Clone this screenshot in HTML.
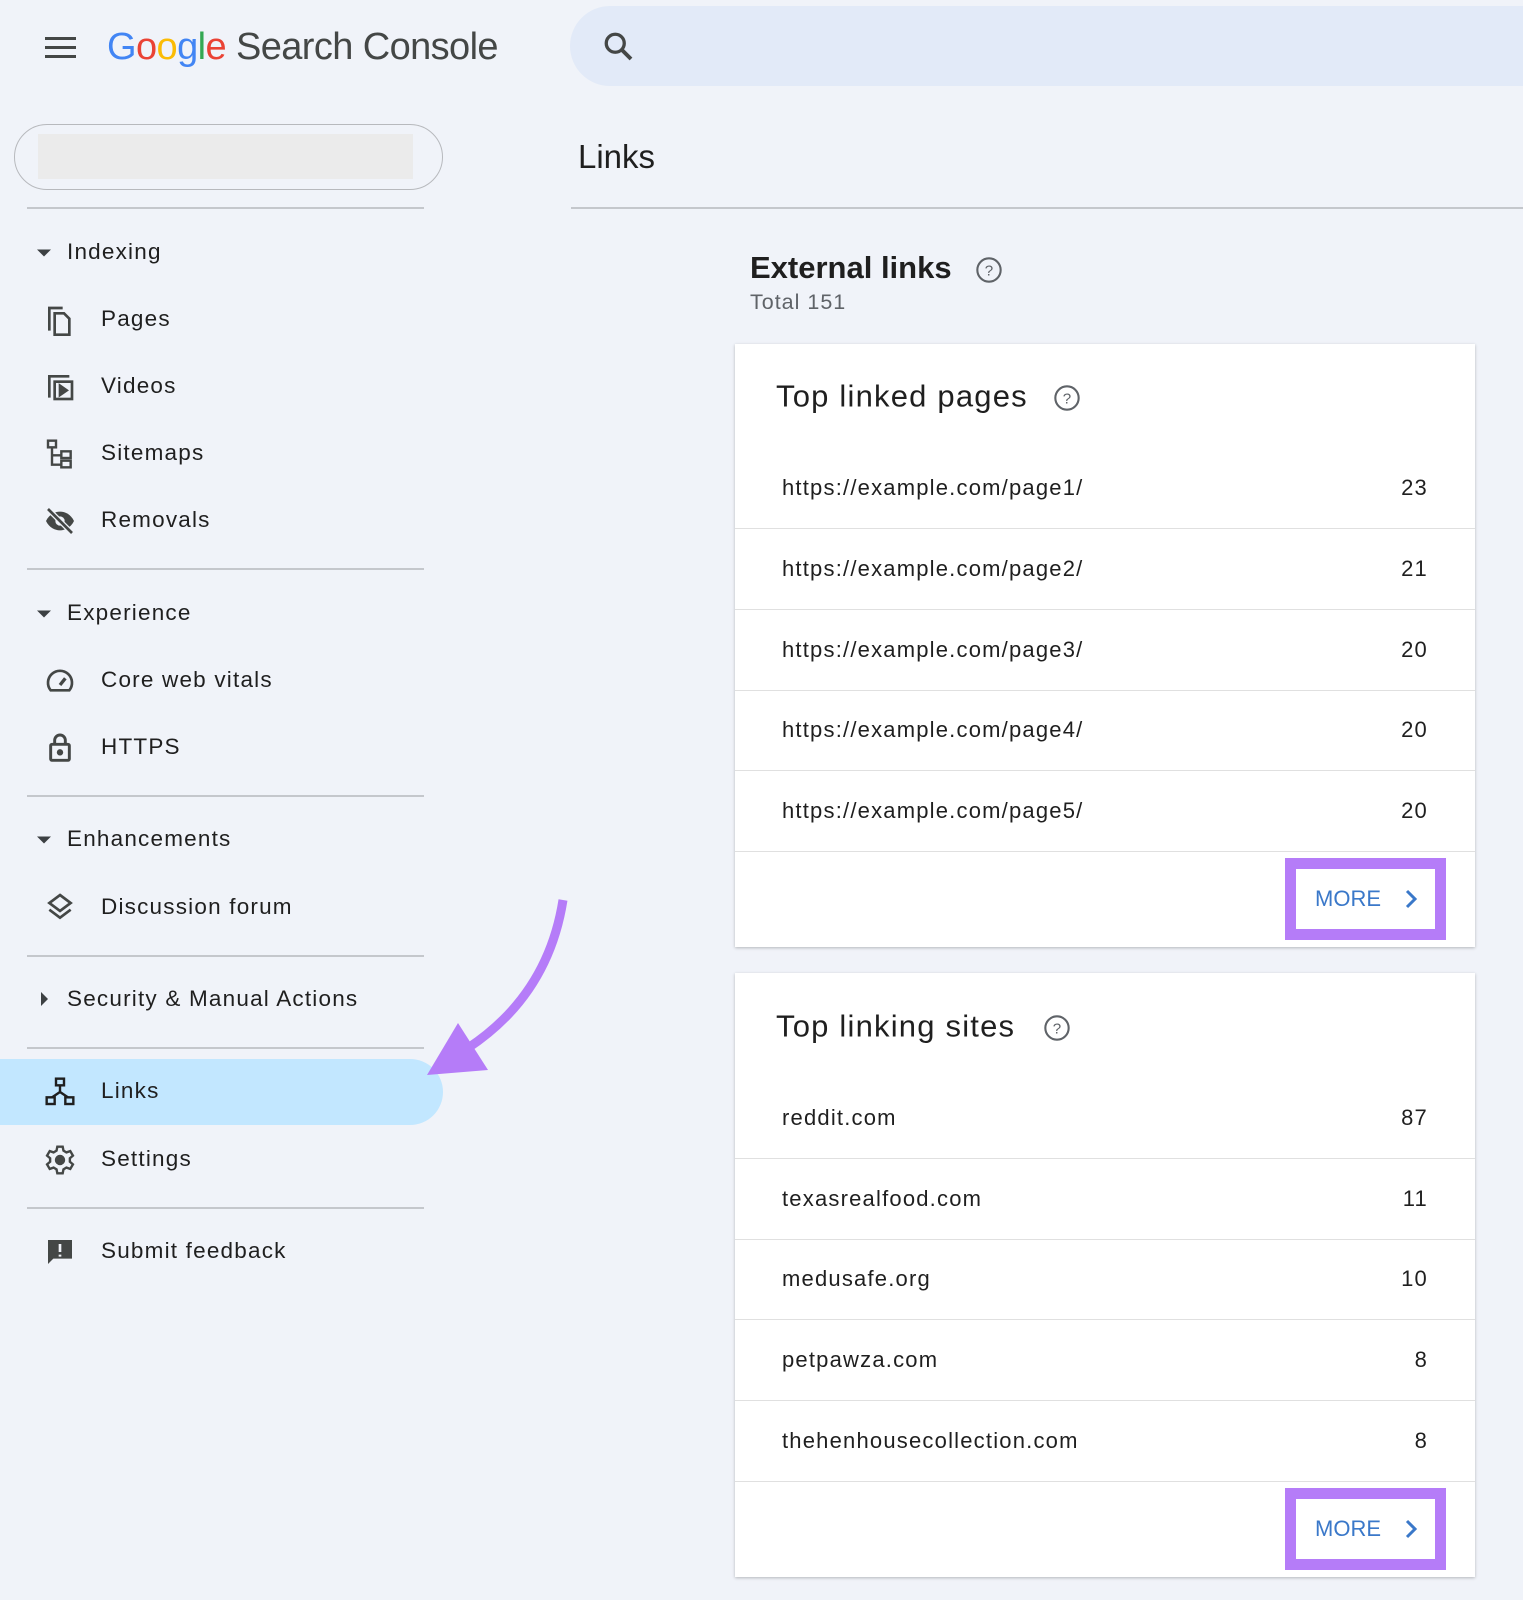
<!DOCTYPE html>
<html><head><meta charset="utf-8"><style>
*{margin:0;padding:0;box-sizing:border-box}
body{width:1523px;height:1600px;background:#f0f3f9;font-family:"Liberation Sans",Roboto,sans-serif;color:#1f1f1f;position:relative;overflow:hidden}
.a{position:absolute}
.hr{position:absolute;height:2px;background:#c4c7cc}
.nav{position:absolute;left:101px;font-size:22.5px;color:#1f1f1f;line-height:1;transform:translateY(-50%);letter-spacing:1.2px}
.sec{position:absolute;left:67px;font-size:22.5px;color:#1f1f1f;line-height:1;transform:translateY(-50%);letter-spacing:1.2px}
.ic{position:absolute;left:44px;width:32px;height:32px;transform:translateY(-50%)}
.tri{position:absolute;left:37px;width:0;height:0;border-left:7px solid transparent;border-right:7px solid transparent;border-top:7px solid #3c4043;transform:translateY(-50%)}
.card{position:absolute;left:735px;width:740px;background:#fff;box-shadow:0 1px 3px rgba(0,0,0,.25)}
.row{position:absolute;left:0;right:0;height:81px;border-bottom:1.5px solid #e0e0e0;font-size:22px;letter-spacing:1.2px}
.row span{position:absolute;top:50%;transform:translateY(-50%)}
.row .l{left:47px}.row .r{right:47px}
.ct{position:absolute;left:41px;font-size:31px;line-height:1;transform:translateY(-50%);letter-spacing:1.2px}
.more{position:absolute;left:550px;width:161px;height:82px;border:11px solid #b57cf8;background:#fff}
.more span{position:absolute;left:19px;top:50%;transform:translateY(-50%);font-size:22px;color:#3a78c9;font-weight:500}
</style></head><body>
<!-- header -->
<div class="a" style="left:45px;top:37px;width:31px;height:3px;background:#444746"></div>
<div class="a" style="left:45px;top:46px;width:31px;height:3px;background:#444746"></div>
<div class="a" style="left:45px;top:55px;width:31px;height:3px;background:#444746"></div>
<div class="a" style="left:107px;top:28px;font-size:38px;line-height:1;white-space:nowrap;letter-spacing:-0.6px"><span style="color:#4285f4">G</span><span style="color:#ea4335">o</span><span style="color:#fbbc05">o</span><span style="color:#4285f4">g</span><span style="color:#34a853">l</span><span style="color:#ea4335">e</span> <span style="color:#444746">Search Console</span></div>
<div class="a" style="left:570px;top:6px;width:1000px;height:80px;border-radius:40px;background:#e2eaf8"></div>
<svg class="a" style="left:601px;top:29px" width="36" height="36" viewBox="0 0 24 24"><circle cx="9.5" cy="9.5" r="6" fill="none" stroke="#444746" stroke-width="2.2"/><path d="M14 14l6 6" stroke="#444746" stroke-width="2.6"/></svg>
<!-- property -->
<div class="a" style="left:14px;top:124px;width:429px;height:66px;border:1.5px solid #b7b9bd;border-radius:33px"></div>
<div class="a" style="left:38px;top:134px;width:375px;height:45px;background:#ebebeb"></div>
<div class="hr" style="left:27px;top:207px;width:397px"></div>
<div class="hr" style="left:27px;top:568px;width:397px"></div>
<div class="hr" style="left:27px;top:795px;width:397px"></div>
<div class="hr" style="left:27px;top:955px;width:397px"></div>
<div class="hr" style="left:27px;top:1047px;width:397px"></div>
<div class="hr" style="left:27px;top:1207px;width:397px"></div>
<!-- nav -->
<div class="tri" style="top:253px"></div><div class="sec" style="top:252px">Indexing</div>
<svg class="ic" style="top:320px" viewBox="0 0 24 24" fill="none" stroke="#444746" stroke-width="2"><path d="M4 20V3h10"/><path d="M8 7h7l4 4v12H8z"/></svg><div class="nav" style="top:319px">Pages</div>
<svg class="ic" style="top:387px" viewBox="0 0 24 24" fill="none" stroke="#444746" stroke-width="2"><path d="M4 20V4h15"/><rect x="8" y="8" width="13" height="13"/><path d="M12 11v7l5-3.5z" fill="#444746"/></svg><div class="nav" style="top:386px">Videos</div>
<svg class="ic" style="top:454px" viewBox="0 0 24 24" fill="none" stroke="#444746" stroke-width="1.8"><rect x="3" y="2" width="6" height="5"/><path d="M6 7v13h7M6 13h7"/><rect x="13" y="10" width="7" height="5"/><rect x="13" y="17" width="7" height="5"/></svg><div class="nav" style="top:453px">Sitemaps</div>
<svg class="ic" style="top:521px" viewBox="0 0 24 24"><path d="M1.5 12C4 7 8 5 12 5s8 2 10.5 7c-2.5 5-6.5 7-10.5 7S4 17 1.5 12z" fill="#444746"/><circle cx="12" cy="12" r="3.5" fill="#f0f3f9"/><path d="M3 3l18 18" stroke="#f0f3f9" stroke-width="4"/><path d="M3 3l18 18" stroke="#444746" stroke-width="2"/></svg><div class="nav" style="top:520px">Removals</div>
<div class="tri" style="top:614px"></div><div class="sec" style="top:613px">Experience</div>
<svg class="ic" style="top:681px" viewBox="0 0 24 24" fill="none" stroke="#444746" stroke-width="2"><path d="M5 19a9 9 0 1 1 14 0z"/><path d="M12 15l4-5" stroke-width="2.5"/></svg><div class="nav" style="top:680px">Core web vitals</div>
<svg class="ic" style="top:747px" viewBox="0 0 24 24" fill="none" stroke="#444746" stroke-width="2.2"><rect x="5" y="10" width="14" height="12" rx="1"/><path d="M8 10V7a4 4 0 0 1 8 0v3"/><circle cx="12" cy="16" r="1.3" fill="#444746"/></svg><div class="nav" style="top:747px">HTTPS</div>
<div class="tri" style="top:840px"></div><div class="sec" style="top:839px">Enhancements</div>
<svg class="ic" style="top:907px" viewBox="0 0 24 24" fill="none" stroke="#444746" stroke-width="2"><path d="M12 3l8 6-8 6-8-6z"/><path d="M4 14l8 6 8-6"/></svg><div class="nav" style="top:907px">Discussion forum</div>
<div class="a" style="left:41px;top:992px;border-top:7px solid transparent;border-bottom:7px solid transparent;border-left:7px solid #3c4043"></div><div class="sec" style="top:999px">Security &amp; Manual Actions</div>
<div class="a" style="left:0;top:1059px;width:443px;height:66px;background:#c2e7ff;border-radius:0 33px 33px 0"></div>
<svg class="ic" style="top:1092px" viewBox="0 0 24 24" fill="none" stroke="#1f1f1f" stroke-width="1.8"><rect x="9" y="2" width="6" height="5"/><path d="M12 7v5M6 16l6-4 6 4"/><rect x="2" y="16" width="6" height="5"/><rect x="16" y="16" width="6" height="5"/></svg><div class="nav" style="top:1091px">Links</div>
<svg class="ic" style="top:1160px" viewBox="0 0 24 24" fill="none" stroke="#444746" stroke-width="1.8"><path d="M10 2h4l.6 3 2.2 1.3 2.9-1 2 3.4-2.3 2v2.6l2.3 2-2 3.4-2.9-1-2.2 1.3-.6 3h-4l-.6-3-2.2-1.3-2.9 1-2-3.4 2.3-2v-2.6l-2.3-2 2-3.4 2.9 1L9.4 5z"/><circle cx="12" cy="12" r="3" fill="#444746"/></svg><div class="nav" style="top:1159px">Settings</div>
<svg class="ic" style="top:1252px" viewBox="0 0 24 24"><path d="M3 3h18v14H7l-4 4z" fill="#444746"/><path d="M12 6v6M12 14v1.5" stroke="#f0f3f9" stroke-width="2"/></svg><div class="nav" style="top:1251px">Submit feedback</div>
<!-- arrow -->
<svg class="a" style="left:0;top:0" width="1523" height="1600"><path d="M563 900 Q548 995 468 1048" fill="none" stroke="#b57cf8" stroke-width="9"/><path d="M458 1023 L488 1070 L427 1075 z" fill="#b57cf8"/></svg>
<!-- main -->
<div class="a" style="left:578px;top:140px;font-size:33px;color:#1f1f1f;line-height:1">Links</div>
<div class="hr" style="left:571px;top:207px;width:952px;background:#c4c7cc"></div>
<div class="a" style="left:750px;top:252px;font-size:31px;font-weight:bold;line-height:1;color:#1f1f1f">External links</div>
<svg class="a" style="left:975px;top:256px" width="28" height="28" viewBox="0 0 24 24"><circle cx="12" cy="12" r="10" fill="none" stroke="#5f6368" stroke-width="1.8"/><text x="12" y="16.5" font-size="13" text-anchor="middle" fill="#5f6368" font-family="Liberation Sans">?</text></svg>
<div class="a" style="left:750px;top:292px;font-size:21.5px;color:#5f6368;line-height:1;letter-spacing:1px">Total 151</div>

<div class="card" style="top:344px;height:603px">
<div class="ct" style="top:52px">Top linked pages</div>
<svg class="a" style="left:318px;top:40px" width="28" height="28" viewBox="0 0 24 24"><circle cx="12" cy="12" r="10" fill="none" stroke="#5f6368" stroke-width="1.8"/><text x="12" y="16.5" font-size="13" text-anchor="middle" fill="#5f6368" font-family="Liberation Sans">?</text></svg>
<div class="row" style="top:104px"><span class="l">https://example.com/page1/</span><span class="r">23</span></div>
<div class="row" style="top:185px"><span class="l">https://example.com/page2/</span><span class="r">21</span></div>
<div class="row" style="top:266px"><span class="l">https://example.com/page3/</span><span class="r">20</span></div>
<div class="row" style="top:346px"><span class="l">https://example.com/page4/</span><span class="r">20</span></div>
<div class="row" style="top:427px"><span class="l">https://example.com/page5/</span><span class="r">20</span></div>
<div class="more" style="top:514px"><span>MORE</span><svg class="a" style="left:103px;top:18px" width="24" height="24" viewBox="0 0 24 24"><path d="M8 4l8 8-8 8" fill="none" stroke="#3a78c9" stroke-width="3"/></svg></div>
</div>

<div class="card" style="top:973px;height:604px">
<div class="ct" style="top:53px">Top linking sites</div>
<svg class="a" style="left:308px;top:41px" width="28" height="28" viewBox="0 0 24 24"><circle cx="12" cy="12" r="10" fill="none" stroke="#5f6368" stroke-width="1.8"/><text x="12" y="16.5" font-size="13" text-anchor="middle" fill="#5f6368" font-family="Liberation Sans">?</text></svg>
<div class="row" style="top:105px"><span class="l">reddit.com</span><span class="r">87</span></div>
<div class="row" style="top:186px"><span class="l">texasrealfood.com</span><span class="r">11</span></div>
<div class="row" style="top:266px"><span class="l">medusafe.org</span><span class="r">10</span></div>
<div class="row" style="top:347px"><span class="l">petpawza.com</span><span class="r">8</span></div>
<div class="row" style="top:428px"><span class="l">thehenhousecollection.com</span><span class="r">8</span></div>
<div class="more" style="top:515px"><span>MORE</span><svg class="a" style="left:103px;top:18px" width="24" height="24" viewBox="0 0 24 24"><path d="M8 4l8 8-8 8" fill="none" stroke="#3a78c9" stroke-width="3"/></svg></div>
</div>
</body></html>
